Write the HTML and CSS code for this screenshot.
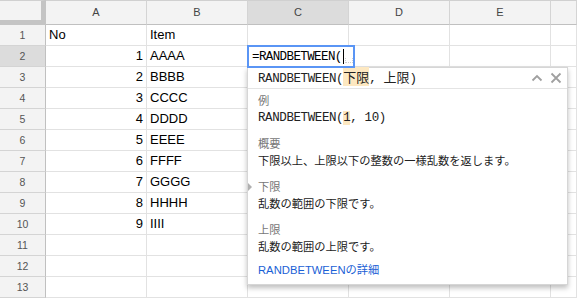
FILE: index.html
```html
<!DOCTYPE html>
<html lang="ja">
<head>
  <meta charset="UTF-8">
  <title>RANDBETWEEN</title>
  <link rel="stylesheet" href="styles.css">
</head>
<body>
  <div class="sheet">
    <div class="grid">
      <div class="corner"></div>
      <div class="colhead">A</div>
      <div class="colhead">B</div>
      <div class="colhead active">C</div>
      <div class="colhead">D</div>
      <div class="colhead">E</div>
      <div class="colhead"></div>

      <div class="rowhead">1</div><div class="cell">No</div><div class="cell">Item</div><div class="cell"></div><div class="cell"></div><div class="cell"></div><div class="cell"></div>
      <div class="rowhead active">2</div><div class="cell num">1</div><div class="cell">AAAA</div><div class="cell"></div><div class="cell"></div><div class="cell"></div><div class="cell"></div>
      <div class="rowhead">3</div><div class="cell num">2</div><div class="cell">BBBB</div><div class="cell"></div><div class="cell"></div><div class="cell"></div><div class="cell"></div>
      <div class="rowhead">4</div><div class="cell num">3</div><div class="cell">CCCC</div><div class="cell"></div><div class="cell"></div><div class="cell"></div><div class="cell"></div>
      <div class="rowhead">5</div><div class="cell num">4</div><div class="cell">DDDD</div><div class="cell"></div><div class="cell"></div><div class="cell"></div><div class="cell"></div>
      <div class="rowhead">6</div><div class="cell num">5</div><div class="cell">EEEE</div><div class="cell"></div><div class="cell"></div><div class="cell"></div><div class="cell"></div>
      <div class="rowhead">7</div><div class="cell num">6</div><div class="cell">FFFF</div><div class="cell"></div><div class="cell"></div><div class="cell"></div><div class="cell"></div>
      <div class="rowhead">8</div><div class="cell num">7</div><div class="cell">GGGG</div><div class="cell"></div><div class="cell"></div><div class="cell"></div><div class="cell"></div>
      <div class="rowhead">9</div><div class="cell num">8</div><div class="cell">HHHH</div><div class="cell"></div><div class="cell"></div><div class="cell"></div><div class="cell"></div>
      <div class="rowhead">10</div><div class="cell num">9</div><div class="cell">IIII</div><div class="cell"></div><div class="cell"></div><div class="cell"></div><div class="cell"></div>
      <div class="rowhead">11</div><div class="cell"></div><div class="cell"></div><div class="cell"></div><div class="cell"></div><div class="cell"></div><div class="cell"></div>
      <div class="rowhead">12</div><div class="cell"></div><div class="cell"></div><div class="cell"></div><div class="cell"></div><div class="cell"></div><div class="cell"></div>
      <div class="rowhead">13</div><div class="cell"></div><div class="cell"></div><div class="cell"></div><div class="cell"></div><div class="cell"></div><div class="cell"></div>
    </div>

    <!-- cell editor -->
    <div class="editor">
      <span class="mono">=RANDBETWEEN(</span><span class="caret"></span><span class="slot"></span>
    </div>

    <!-- formula help popup -->
    <div class="hint">
      <div class="hint-head">
        <div class="mono sig">RANDBETWEEN(<span class="cjk hl">下限</span>, <span class="cjk">上限</span>)</div>
        <div class="hint-icons">
          <svg width="12" height="12" viewBox="0 0 12 12"><path d="M1.5 8.5 L6 4 L10.5 8.5" fill="none" stroke="#a0a0a0" stroke-width="1.8"/></svg>
          <svg width="12" height="12" viewBox="0 0 12 12"><path d="M1.5 1.5 L10.5 10.5 M10.5 1.5 L1.5 10.5" fill="none" stroke="#a0a0a0" stroke-width="1.8"/></svg>
        </div>
      </div>
      <div class="hint-body">
        <div class="sec">
          <p class="label">例</p>
          <p class="mono val">RANDBETWEEN(<span class="hl">1</span>, 10)</p>
        </div>
        <div class="sec">
          <p class="label">概要</p>
          <p class="val">下限以上、上限以下の整数の一様乱数を返します。</p>
        </div>
        <div class="sec current">
          <p class="label">下限</p>
          <p class="val">乱数の範囲の下限です。</p>
        </div>
        <div class="sec">
          <p class="label">上限</p>
          <p class="val">乱数の範囲の上限です。</p>
        </div>
        <a class="more" href="#">RANDBETWEENの詳細</a>
      </div>
    </div>
  </div>
</body>
</html>
```

FILE: styles.css
```css
*, *:before, *:after{
  padding: 0;
  margin: 0;
  box-sizing: border-box;
}
body{
  width: 577px;
  height: 300px;
  overflow: hidden;
  background: #ffffff;
  font-family: "Liberation Sans", Arial, "Noto Sans CJK JP", sans-serif;
}
.sheet{
  position: relative;
  width: 577px;
  height: 300px;
}
.grid{
  display: grid;
  grid-template-columns: 46px repeat(5, 101px) 1fr;
  grid-template-rows: 25px repeat(13, 21px);
}
.corner{
  background: #f3f3f3;
  border-top: 1px solid #d0d0d0;
  border-right: 5px solid #c4c4c4;
  border-bottom: 5px solid #c4c4c4;
}
.colhead{
  background: #f3f3f3;
  border-top: 1px solid #d0d0d0;
  border-right: 1px solid #d4d4d4;
  border-bottom: 1px solid #c0c0c0;
  color: #444;
  font-size: 11px;
  display: flex;
  align-items: center;
  justify-content: center;
  padding-bottom: 1px;
}
.rowhead{
  background: #f3f3f3;
  border-right: 1px solid #c0c0c0;
  border-bottom: 1px solid #d4d4d4;
  color: #555;
  font-size: 10.5px;
  display: flex;
  align-items: center;
  justify-content: center;
}
.colhead.active, .rowhead.active{
  background: #dcdcdc;
}
.cell{
  border-right: 1px solid #e2e2e2;
  border-bottom: 1px solid #e2e2e2;
  font-size: 13px;
  color: #000;
  line-height: 20px;
  padding: 0 3px;
  white-space: nowrap;
}
.cell.num{
  text-align: right;
}
.mono{
  font-family: "Liberation Mono", "Noto Sans CJK JP", monospace;
  font-size: 12.5px;
  letter-spacing: -0.6px;
}
.hint .mono{
  letter-spacing: -0.4px;
}
.cjk{
  font-family: "Noto Sans CJK JP", sans-serif;
  font-size: 13px;
  letter-spacing: 0;
}
.hl{
  background: #fde8c1;
}

/* editor over C2 */
.editor{
  position: absolute;
  left: 247px;
  top: 45px;
  width: 108px;
  height: 23px;
  background: #fff;
  border: 2px solid #5a95f5;
  display: flex;
  align-items: center;
  padding-left: 3px;
  color: #000;
  z-index: 2;
}
.caret{
  width: 1px;
  height: 15px;
  background: #000;
  margin-left: 1px;
}
.slot{
  width: 10px;
  height: 5px;
  margin: 8px 0 0 2px;
  border: 1px dotted #cfcfcf;
  border-top: none;
}

/* help popup */
.hint{
  position: absolute;
  left: 247px;
  top: 67px;
  width: 321px;
  height: 218px;
  background: #fff;
  border: 1px solid #d6d6d6;
  box-shadow: 0 3px 5px rgba(0,0,0,0.25);
  z-index: 1;
}
.hint-head{
  height: 21px;
  border-bottom: 1px solid #e4e4e4;
  display: flex;
  align-items: center;
  justify-content: space-between;
  padding: 0 4px 0 10px;
  color: #222;
}
.sig{
  line-height: 20px;
}
.hint-icons{
  display: flex;
  gap: 7px;
  padding-right: 1px;
}
.hint-body{
  padding: 4px 10px 0 10px;
  font-family: "Liberation Sans", Arial, "Noto Sans CJK JP", sans-serif;
  font-size: 11.25px;
}
.sec{
  position: relative;
  margin-bottom: 9px;
}
.label{
  color: #777;
  line-height: 16px;
}
.val{
  color: #222;
  line-height: 18px;
}
.val.mono{
  font-size: 12.5px;
}
.current:before{
  content: "";
  position: absolute;
  left: -10px;
  top: 4px;
  border-left: 4px solid #b0b0b0;
  border-top: 4px solid transparent;
  border-bottom: 4px solid transparent;
}
.more{
  display: block;
  color: #1a5fd6;
  text-decoration: none;
  line-height: 18px;
  margin-top: -4px;
}
```
